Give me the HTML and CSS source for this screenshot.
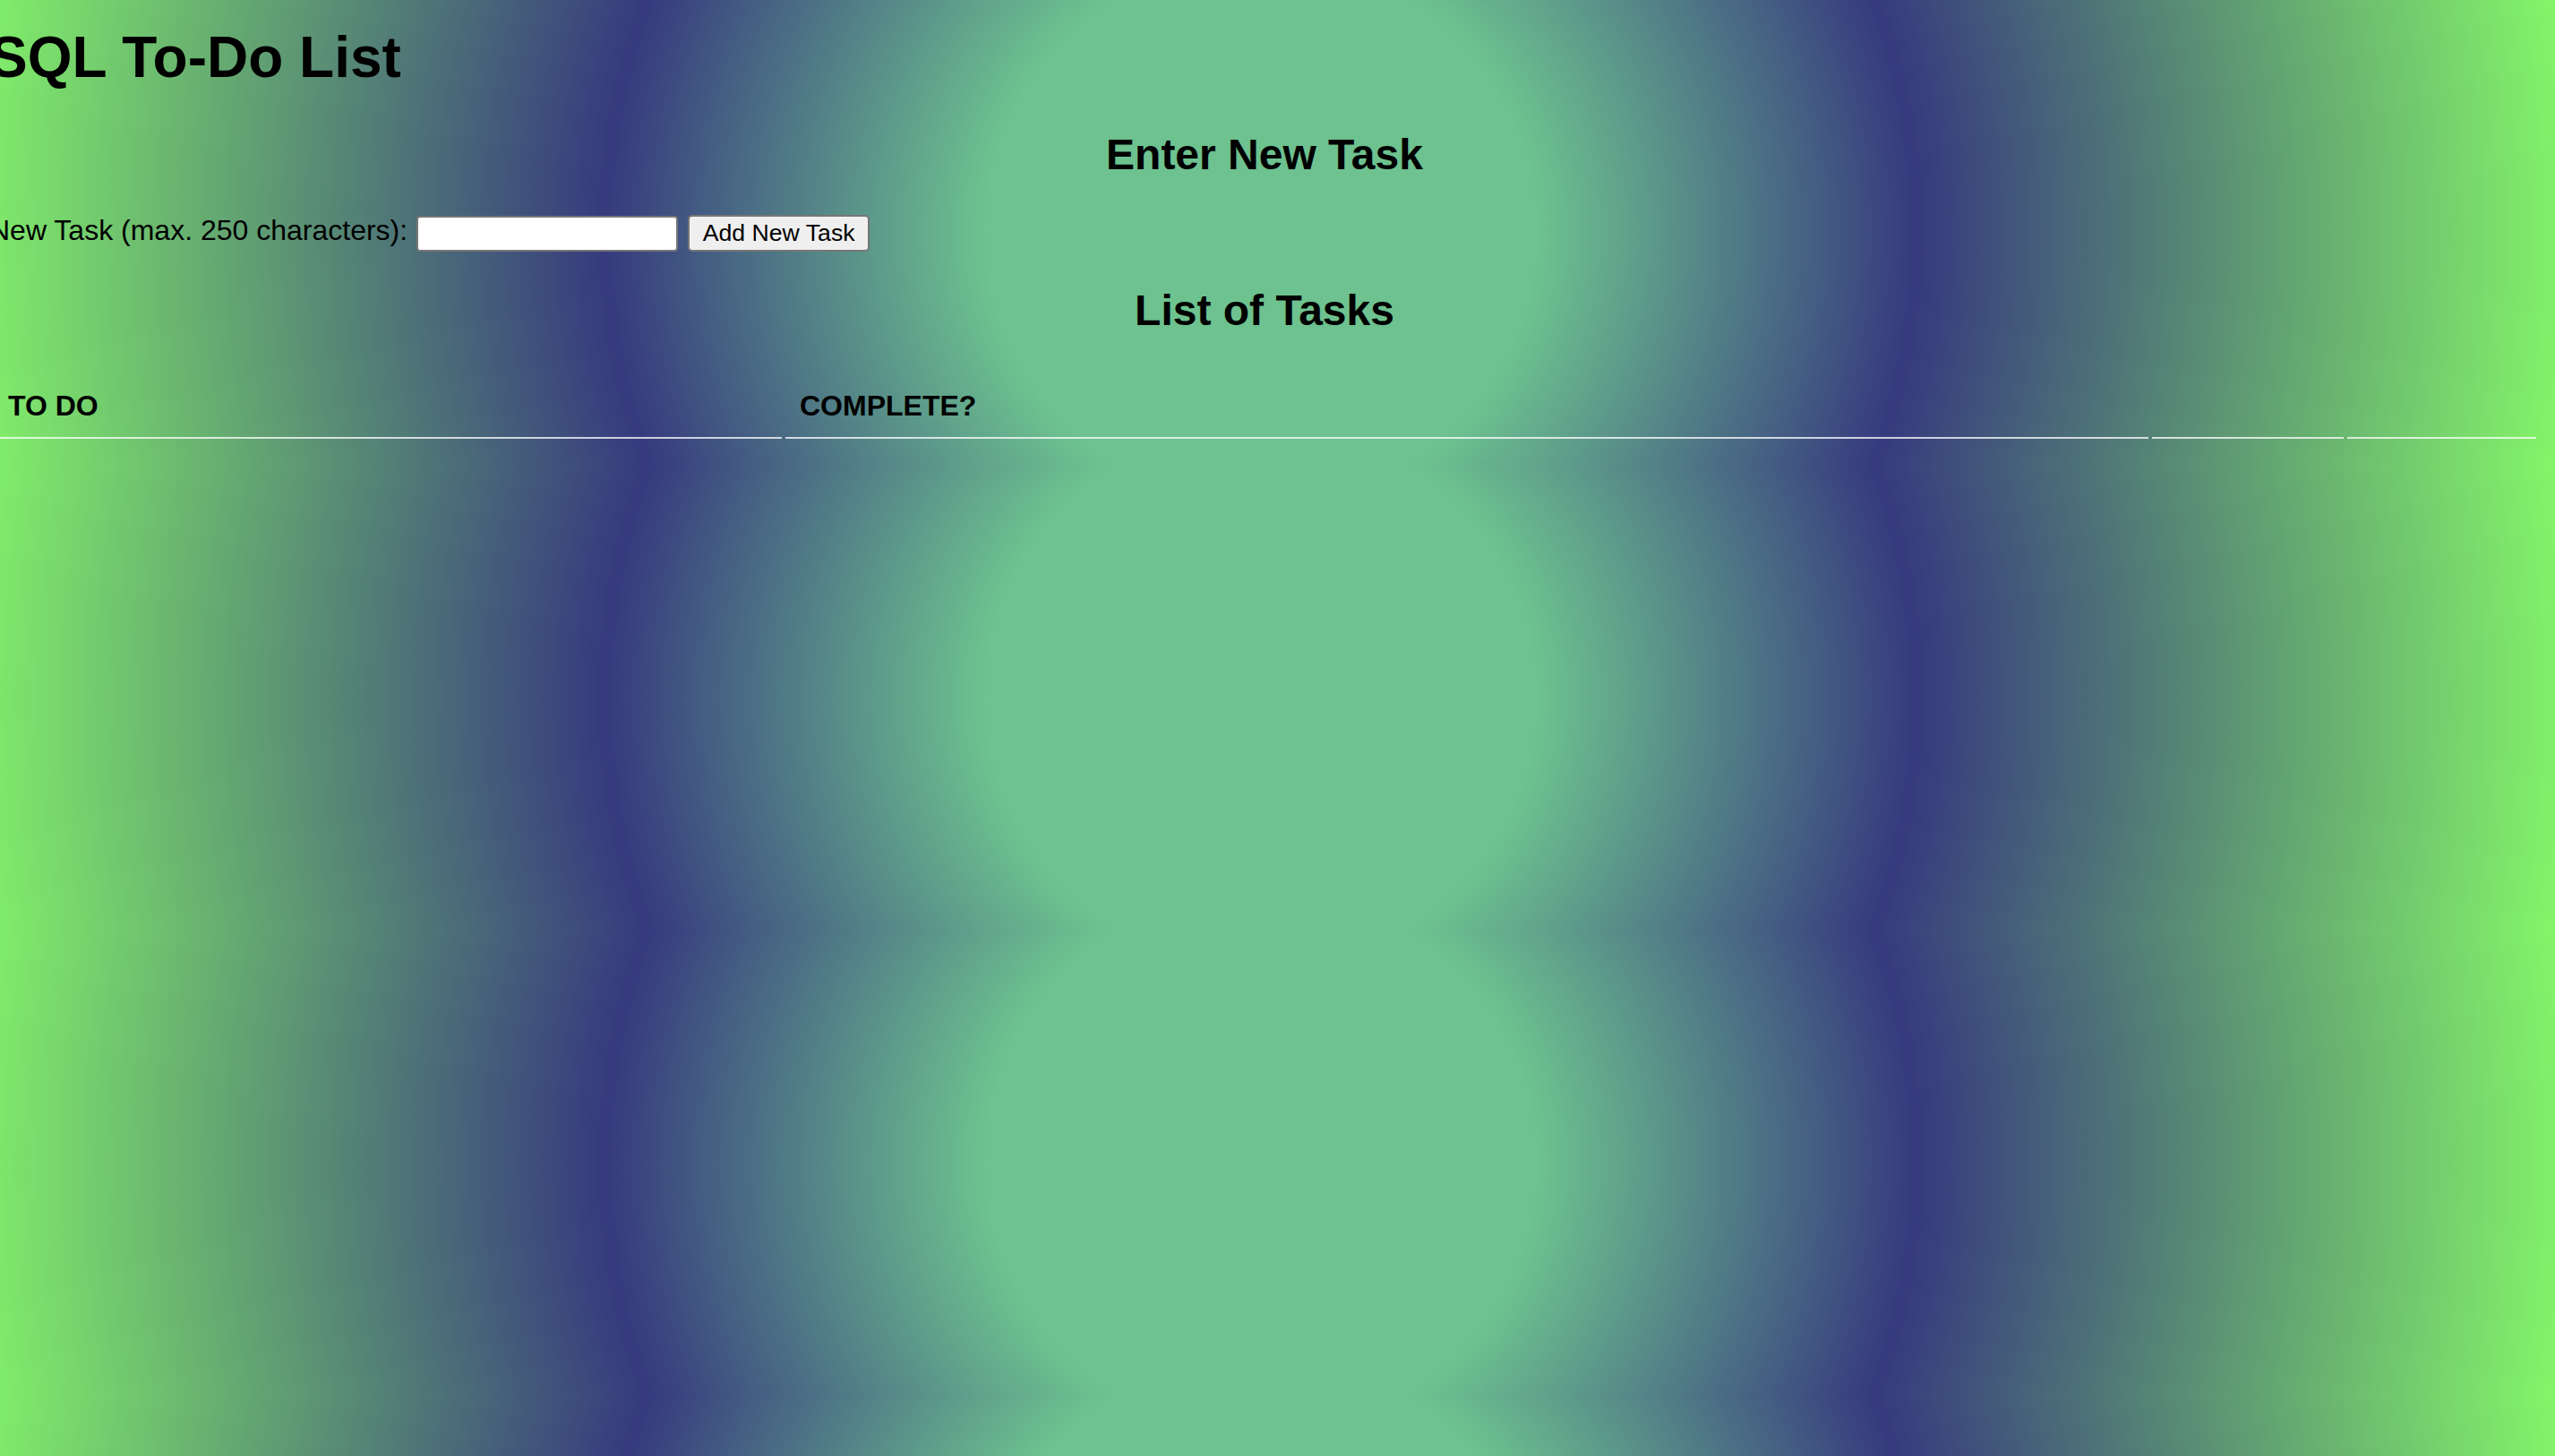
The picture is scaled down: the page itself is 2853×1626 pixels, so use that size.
FILE: index.html
```html
<!DOCTYPE html>
<html lang="en">
<head>
<meta charset="utf-8">
<title>SQL To-Do List</title>
<link rel="stylesheet" href="styles.css">
</head>
<body>
  <h1 class="page-title">SQL To-Do List</h1>

  <h2 class="section-title section-title--enter">Enter New Task</h2>
  <form class="task-form">
    <label class="task-label" for="new-task">New Task (max. 250 characters):</label>
    <input class="task-input" id="new-task" type="text" maxlength="250">
    <button class="task-button" type="button">Add New Task</button>
  </form>

  <h2 class="section-title section-title--list">List of Tasks</h2>
  <table class="task-table">
    <thead>
      <tr>
        <th class="col-todo">TO DO</th>
        <th class="col-complete">COMPLETE?</th>
        <th class="col-action"></th>
        <th class="col-action col-action--last"></th>
      </tr>
    </thead>
    <tbody></tbody>
  </table>
</body>
</html>
```

FILE: styles.css
```css
html {
  background-color: #6dc28f;
  background-image: radial-gradient(circle farthest-corner at 50% 50%, #6dc28f 21%, #363a7e 50%, #84f469 100%);
  background-size: 2880px 519px;
  background-position: -32px 0;
  background-repeat: repeat;
}

body {
  margin: 0 17px 0 -12px;
  padding: 27px 0 0;
  font-family: "Liberation Sans", Arial, Helvetica, sans-serif;
  color: #000;
}

.page-title {
  margin: 0;
  font-size: 64px;
  line-height: 74px;
  font-weight: bold;
}

.section-title {
  margin: 0;
  font-size: 48px;
  line-height: 56px;
  font-weight: bold;
  text-align: center;
}

.section-title--enter {
  margin-top: 44px;
}

.section-title--list {
  margin-top: 38px;
}

.task-form {
  display: flex;
  align-items: flex-start;
  margin: 39px 0 0;
}

.task-label {
  font-size: 32px;
  line-height: 34px;
  white-space: nowrap;
}

.task-input {
  box-sizing: border-box;
  width: 292px;
  height: 40px;
  margin: 1px 0 0 10px;
  padding: 0 4px;
  border: 2px solid #767676;
  border-radius: 4px;
  background: #fff;
  font-family: "Liberation Sans", Arial, sans-serif;
  font-size: 26.67px;
}

.task-button {
  box-sizing: border-box;
  width: 203px;
  height: 41px;
  margin: 0 0 0 11px;
  padding: 0 12px;
  border: 2px solid #767676;
  border-radius: 5px;
  background: #efefef;
  color: #000;
  font-family: "Liberation Sans", Arial, sans-serif;
  font-size: 26.67px;
  line-height: 1;
}

.task-table {
  width: 100%;
  margin-top: 43px;
  border-collapse: separate;
  border-spacing: 4px 0;
  table-layout: fixed;
}

.task-table th {
  box-sizing: border-box;
  padding: 17px 16px 16px;
  border-bottom: 2px solid rgba(255, 255, 255, 0.75);
  font-size: 32px;
  line-height: 37px;
  font-weight: bold;
  text-align: left;
}

.task-table th.col-todo {
  width: 881px;
  padding-left: 17px;
}

.task-table th.col-action {
  width: 214px;
}

.task-table th.col-action--last {
  width: 211px;
}
```
